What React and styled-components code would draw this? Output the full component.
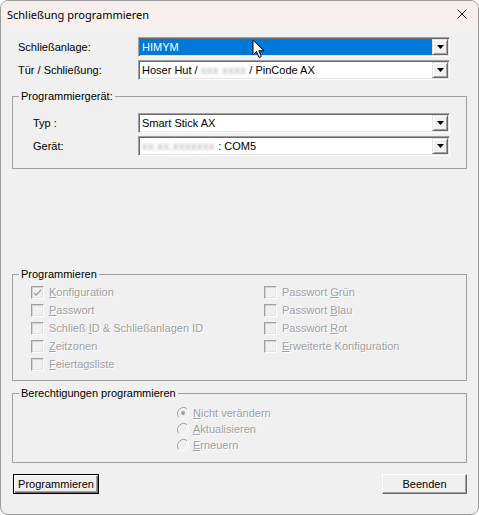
import React from "react";
import styled, { createGlobalStyle } from "styled-components";

const GlobalStyle = createGlobalStyle`
  html, body { margin: 0; padding: 0; background: #ffffff; }
  body { font-family: "Liberation Sans", Arial, sans-serif; }
`;

const Window = styled.div`
  position: relative;
  width: 479px;
  height: 515px;
  box-sizing: border-box;
  border: 1px solid #9c9c9c;
  border-radius: 8px;
  overflow: hidden;
  background: #f0f0f0;
  display: flex;
  flex-direction: column;
`;

const TitleBar = styled.div`
  height: 26px;
  flex-shrink: 0;
  display: flex;
  align-items: center;
  justify-content: space-between;
  padding: 0 11px 0 6px;
  background: #f7efee;
  font-family: "Noto Sans", "Open Sans", sans-serif;
  font-size: 11px;
  color: #000;
`;

const Content = styled.div`
  flex: 1;
  display: flex;
  flex-direction: column;
  padding: 10px 11px 19px;
  font-size: 11px;
  color: #000;
`;

const FieldGrid = styled.div`
  display: grid;
  grid-template-columns: ${(p) => p.$label}px 312px;
  grid-auto-rows: 20px;
  row-gap: 3px;
  align-items: center;
  margin-left: ${(p) => p.$indent || 0}px;
`;

const Label = styled.span`
  font-size: 11px;
  white-space: nowrap;
`;

const ComboBox = styled.div`
  height: 20px;
  box-sizing: border-box;
  display: flex;
  padding: 1px;
  background: #fff;
  border-top: 1px solid #a0a0a0;
  border-left: 1px solid #a0a0a0;
  border-bottom: 1px solid #fff;
  border-right: 1px solid #fff;
  box-shadow: inset 1px 1px 0 #696969, inset -1px -1px 0 #e3e3e3;
`;

const ComboText = styled.div`
  flex: 1;
  display: flex;
  align-items: center;
  padding-left: 2px;
  white-space: nowrap;
  overflow: hidden;
  font-size: 11px;
  background: ${(p) => (p.$selected ? "#0078d7" : "#fff")};
  color: ${(p) => (p.$selected ? "#fff" : "#000")};
`;

const DropButton = styled.div`
  width: 16px;
  box-sizing: border-box;
  display: flex;
  align-items: center;
  justify-content: center;
  background: #f0f0f0;
  border-top: 1px solid #e3e3e3;
  border-left: 1px solid #e3e3e3;
  border-bottom: 1px solid #696969;
  border-right: 1px solid #696969;
  box-shadow: inset 1px 1px 0 #fff, inset -1px -1px 0 #a0a0a0;
`;

const Blurred = styled.span`
  display: inline-block;
  color: #a9a9a9;
  filter: blur(1.4px);
  letter-spacing: 0.5px;
`;

const Group = styled.fieldset`
  margin: ${(p) => p.$top}px 0 0;
  padding: 0;
  border: 1px solid #a0a0a0;
  min-width: 0;
`;

const Legend = styled.legend`
  margin-left: 6px;
  padding: 0 2px;
  font-family: "Liberation Sans", Arial, sans-serif;
  font-size: 11px;
  font-weight: 400;
  line-height: 13px;
  color: #000;
`;

const GroupBody = styled.div`
  padding: ${(p) => p.$pad};
`;

const CheckGrid = styled.div`
  display: grid;
  grid-template-columns: 233px 1fr;
  grid-template-rows: repeat(5, 18px);
  grid-auto-flow: column;
`;

const OptionRow = styled.div`
  display: flex;
  align-items: center;
  gap: ${(p) => p.$gap}px;
  height: ${(p) => p.$h}px;
  color: #a0a0a0;
  text-shadow: 1px 1px 0 #fff;
  white-space: nowrap;
`;

const CheckBox = styled.span`
  width: 13px;
  height: 13px;
  box-sizing: border-box;
  display: flex;
  align-items: center;
  justify-content: center;
  background: #f0f0f0;
  border-top: 1px solid #a0a0a0;
  border-left: 1px solid #a0a0a0;
  border-bottom: 1px solid #fff;
  border-right: 1px solid #fff;
  box-shadow: inset 1px 1px 0 #d4d4d4, inset -1px -1px 0 #e3e3e3;
`;

const RadioList = styled.div`
  display: flex;
  flex-direction: column;
`;

const Key = styled.span`
  text-decoration: underline;
  text-underline-offset: 1px;
`;

const ButtonRow = styled.div`
  display: flex;
  justify-content: space-between;
  margin-top: 11px;
`;

const Button = styled.button`
  height: 20px;
  width: ${(p) => p.$w}px;
  margin-left: ${(p) => (p.$default ? 1 : 0)}px;
  padding: 0;
  box-sizing: border-box;
  font-family: "Liberation Sans", Arial, sans-serif;
  font-size: 11px;
  color: #000;
  background: #f0f0f0;
  border: 1px solid ${(p) => (p.$default ? "#000" : "#fff")};
  border-right-color: ${(p) => (p.$default ? "#000" : "#696969")};
  border-bottom-color: ${(p) => (p.$default ? "#000" : "#696969")};
  box-shadow: ${(p) =>
    p.$default
      ? "inset 1px 1px 0 #fff, inset -1px -1px 0 #696969, inset -2px -2px 0 #a0a0a0"
      : "inset -1px -1px 0 #a0a0a0"};
`;

const Cursor = styled.svg`
  position: absolute;
  left: 251px;
  top: 38px;
`;

const Arrow = () => (
  <svg width="7" height="4" viewBox="0 0 7 4">
    <path d="M0 0h7L3.5 4z" fill="#000" />
  </svg>
);

const Combo = ({ selected, children }) => (
  <ComboBox>
    <ComboText $selected={selected}>{children}</ComboText>
    <DropButton>
      <Arrow />
    </DropButton>
  </ComboBox>
);

const Check = ({ checked, children }) => (
  <OptionRow $gap={5} $h={18}>
    <CheckBox>
      {checked && (
        <svg width="9" height="9" viewBox="0 0 9 9">
          <path d="M1 4l2 2 5-5v2l-5 5-2-2z" fill="#a0a0a0" />
        </svg>
      )}
    </CheckBox>
    <span>{children}</span>
  </OptionRow>
);

const Radio = ({ checked, children }) => (
  <OptionRow $gap={4} $h={16}>
    <svg width="12" height="12" viewBox="0 0 12 12">
      <path d="M10.2 1.8A6 6 0 0 0 1.8 10.2" fill="none" stroke="#a0a0a0" />
      <path d="M1.8 10.2A6 6 0 0 0 10.2 1.8" fill="none" stroke="#fff" />
      <circle cx="6" cy="6" r="4.5" fill="#f0f0f0" />
      {checked && <circle cx="6" cy="6" r="2" fill="#a0a0a0" />}
    </svg>
    <span>{children}</span>
  </OptionRow>
);

export default function App() {
  return (
    <>
      <GlobalStyle />
      <Window>
        <TitleBar>
          <span>Schließung programmieren</span>
          <svg width="10" height="10" viewBox="0 0 10 10">
            <path d="M0.5 0.5l9 9M9.5 0.5l-9 9" stroke="#222" strokeWidth="1" />
          </svg>
        </TitleBar>
        <Content>
          <FieldGrid $label={120} $indent={6}>
            <Label>Schließanlage:</Label>
            <Combo selected>HIMYM</Combo>
            <Label>Tür / Schließung:</Label>
            <Combo>
              Hoser Hut /&nbsp;<Blurred>xxx xxxx</Blurred>&nbsp;/ PinCode AX
            </Combo>
          </FieldGrid>

          <Group $top={10}>
            <Legend>Programmiergerät:</Legend>
            <GroupBody $pad="10px 15px 12px 20px">
              <FieldGrid $label={105}>
                <Label>Typ :</Label>
                <Combo>Smart Stick AX</Combo>
                <Label>Gerät:</Label>
                <Combo>
                  <Blurred>xx.xx.xxxxxxx</Blurred>&nbsp;: COM5
                </Combo>
              </FieldGrid>
            </GroupBody>
          </Group>

          <Group $top={99}>
            <Legend>Programmieren</Legend>
            <GroupBody $pad="2px 10px 7px 18px">
              <CheckGrid>
                <Check checked>
                  <Key>K</Key>onfiguration
                </Check>
                <Check>
                  <Key>P</Key>asswort
                </Check>
                <Check>
                  Schließ <Key>I</Key>D &amp; Schließanlagen ID
                </Check>
                <Check>
                  <Key>Z</Key>eitzonen
                </Check>
                <Check>
                  <Key>F</Key>eiertagsliste
                </Check>
                <Check>
                  Passwort <Key>G</Key>rün
                </Check>
                <Check>
                  Passwort <Key>B</Key>lau
                </Check>
                <Check>
                  Passwort <Key>R</Key>ot
                </Check>
                <Check>
                  <Key>E</Key>rweiterte Konfiguration
                </Check>
              </CheckGrid>
            </GroupBody>
          </Group>

          <Group $top={6}>
            <Legend>Berechtigungen programmieren</Legend>
            <GroupBody $pad="5px 10px 9px 164px">
              <RadioList>
                <Radio checked>
                  <Key>N</Key>icht verändern
                </Radio>
                <Radio>
                  <Key>A</Key>ktualisieren
                </Radio>
                <Radio>
                  <Key>E</Key>rneuern
                </Radio>
              </RadioList>
            </GroupBody>
          </Group>

          <ButtonRow>
            <Button $default $w={86}>Programmieren</Button>
            <Button $w={85}>Beenden</Button>
          </ButtonRow>
        </Content>
        <Cursor width="13" height="20" viewBox="0 0 13 20">
          <path
            d="M1 1v15l3.5-3.5 2.5 6 2.3-1-2.5-5.7H12z"
            fill="#fff"
            stroke="#000"
            strokeWidth="1"
            strokeLinejoin="round"
          />
        </Cursor>
      </Window>
    </>
  );
}
